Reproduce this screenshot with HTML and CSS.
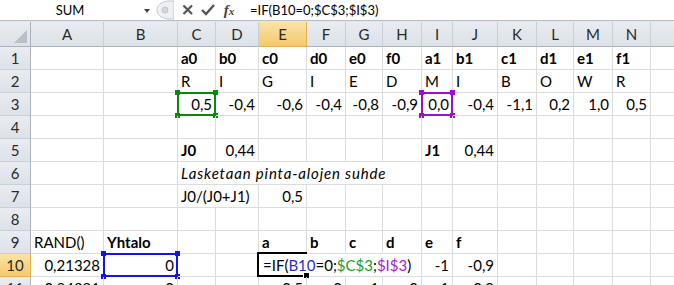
FILE: index.html
```html
<html>
<head>
    <title>Sheet1</title>
    <link rel="stylesheet" href="styles.css">
</head>
<body>
    <div class="fbar">
        <div class="namebox">SUM</div>
        <div class="nbarrow"></div>
        <svg class="splitter" width="20" height="20" viewBox="0 0 20 20">
            <path d="M14 1 C6 2 3 6 3 10 C3 14 6 18 14 19 L20 19 L20 1 Z" fill="#eef0f3" stroke="#c3c8cf"/>
            <circle cx="11" cy="10" r="3" fill="#d3d7dc" stroke="#c0c5cc"/>
        </svg>
        <svg class="fbtn" width="20" height="20" viewBox="0 0 20 20">
            <path d="M5.5 5.5 L14 14 M14 5.5 L5.5 14" stroke="#555" stroke-width="2.2"/>
        </svg>
        <svg class="fbtn" width="20" height="20" viewBox="0 0 20 20">
            <path d="M4 10 L8 14 L16 5" stroke="#555" stroke-width="2.4" fill="none"/>
        </svg>
        <div class="fx"><i>f</i><i class="sub">x</i></div>
        <div class="formula">=IF(B10=0;$C$3;$I$3)</div>
    </div>
    <div class="gap"></div>

    <div class="sheet">
        <div class="corner"><span></span></div>
        <div class="ch">A</div><div class="ch">B</div><div class="ch">C</div><div class="ch">D</div>
        <div class="ch on">E</div><div class="ch">F</div><div class="ch">G</div><div class="ch">H</div>
        <div class="ch">I</div><div class="ch">J</div><div class="ch">K</div><div class="ch">L</div>
        <div class="ch">M</div><div class="ch">N</div><div class="ch">O</div>

        <!-- 1 -->
        <div class="rh">1</div><div class="c"></div><div class="c"></div>
        <div class="c b">a0</div><div class="c b">b0</div><div class="c b">c0</div><div class="c b">d0</div>
        <div class="c b">e0</div><div class="c b">f0</div><div class="c b">a1</div><div class="c b">b1</div>
        <div class="c b">c1</div><div class="c b">d1</div><div class="c b">e1</div><div class="c b">f1</div>
        <div class="c"></div>

        <!-- 2 -->
        <div class="rh">2</div><div class="c"></div><div class="c"></div>
        <div class="c">R</div><div class="c">I</div><div class="c">G</div><div class="c">I</div>
        <div class="c">E</div><div class="c">D</div><div class="c">M</div><div class="c">I</div>
        <div class="c">B</div><div class="c">O</div><div class="c">W</div><div class="c">R</div>
        <div class="c"></div>

        <!-- 3 -->
        <div class="rh">3</div><div class="c"></div><div class="c"></div>
        <div class="c r">0,5<div class="box green"><i></i><i></i><i></i><i></i></div></div>
        <div class="c r">-0,4</div><div class="c r">-0,6</div><div class="c r">-0,4</div>
        <div class="c r">-0,8</div><div class="c r">-0,9</div>
        <div class="c r">0,0<div class="box purple"><i></i><i></i><i></i><i></i></div></div>
        <div class="c r">-0,4</div><div class="c r">-1,1</div><div class="c r">0,2</div>
        <div class="c r">1,0</div><div class="c r">0,5</div><div class="c"></div>

        <!-- 4 -->
        <div class="rh">4</div><div class="c"></div><div class="c"></div><div class="c"></div>
        <div class="c"></div><div class="c"></div><div class="c"></div><div class="c"></div>
        <div class="c"></div><div class="c"></div><div class="c"></div><div class="c"></div>
        <div class="c"></div><div class="c"></div><div class="c"></div><div class="c"></div>

        <!-- 5 -->
        <div class="rh">5</div><div class="c"></div><div class="c"></div>
        <div class="c b">J0</div><div class="c r">0,44</div><div class="c"></div><div class="c"></div>
        <div class="c"></div><div class="c"></div><div class="c b">J1</div><div class="c r">0,44</div>
        <div class="c"></div><div class="c"></div><div class="c"></div><div class="c"></div>
        <div class="c"></div>

        <!-- 6 -->
        <div class="rh">6</div><div class="c"></div><div class="c"></div>
        <div class="c it span6">Lasketaan pinta-alojen suhde</div>
        <div class="c"></div><div class="c"></div><div class="c"></div><div class="c"></div>
        <div class="c"></div><div class="c"></div><div class="c"></div>

        <!-- 7 -->
        <div class="rh">7</div><div class="c"></div><div class="c"></div>
        <div class="c span2">J0/(J0+J1)</div><div class="c r">0,5</div>
        <div class="c"></div><div class="c"></div><div class="c"></div><div class="c"></div>
        <div class="c"></div><div class="c"></div><div class="c"></div><div class="c"></div>
        <div class="c"></div><div class="c"></div>

        <!-- 8 -->
        <div class="rh">8</div><div class="c"></div><div class="c"></div><div class="c"></div>
        <div class="c"></div><div class="c"></div><div class="c"></div><div class="c"></div>
        <div class="c"></div><div class="c"></div><div class="c"></div><div class="c"></div>
        <div class="c"></div><div class="c"></div><div class="c"></div><div class="c"></div>

        <!-- 9 -->
        <div class="rh">9</div><div class="c">RAND()</div><div class="c b">Yhtalo</div>
        <div class="c"></div><div class="c"></div>
        <div class="c b">a</div><div class="c b">b</div><div class="c b">c</div><div class="c b">d</div>
        <div class="c b">e</div><div class="c b">f</div>
        <div class="c"></div><div class="c"></div><div class="c"></div><div class="c"></div>
        <div class="c"></div>

        <!-- 10 -->
        <div class="rh on">10</div><div class="c r">0,21328</div>
        <div class="c r">0<div class="box blue"><i></i><i></i><i></i><i></i></div></div>
        <div class="c"></div><div class="c"></div>
        <div class="c span4 edit">=IF(<span class="kb">B10</span>=0;<span class="kg">$C$3</span>;<span class="kp">$I$3</span>)<div class="active"><i></i></div></div>
        <div class="c r">-1</div><div class="c r">-0,9</div>
        <div class="c"></div><div class="c"></div><div class="c"></div><div class="c"></div>
        <div class="c"></div>

        <!-- 11 -->
        <div class="rh">11</div><div class="c r">0,84891</div><div class="c r">0</div>
        <div class="c"></div><div class="c"></div>
        <div class="c r">-0,5</div><div class="c r">0</div><div class="c r">-1</div><div class="c r">0</div>
        <div class="c r">-1</div><div class="c r">-0,9</div>
        <div class="c"></div><div class="c"></div><div class="c"></div><div class="c"></div>
        <div class="c"></div>
    </div>
</body>
</html>
```

FILE: styles.css
```css
body {
    margin: 0;
    background-color: #fff;
    font-family: Lato, "Liberation Sans", sans-serif;
    color: #000;
    overflow: hidden;
}

/* formula bar */
.fbar {
    display: flex;
    align-items: center;
    height: 20px;
    border-bottom: 1px solid #b6bec8;
    font-size: 13px;
}

.namebox {
    width: 140px;
    text-align: center;
}

.nbarrow {
    width: 14px;
    height: 20px;
    position: relative;
}

.nbarrow::after {
    content: "";
    position: absolute;
    left: 4px;
    top: 9px;
    border-left: 3.5px solid transparent;
    border-right: 3.5px solid transparent;
    border-top: 4px solid #444;
}

.splitter {
    margin-right: 4px;
}

.fx {
    width: 22px;
    text-align: center;
    font-family: "Liberation Serif", serif;
    font-size: 15px;
    color: #444;
    font-weight: bold;
}

.fx .sub {
    font-size: 11px;
}

.formula {
    padding-left: 10px;
}

.gap {
    height: 1px;
    background-color: #e3e7ec;
}

/* grid */
.sheet {
    display: grid;
    grid-template-columns: 31px 73px 74px 38px 43px 48px 39px 37px 39px 31px 45px 39px 37px 39px 38px 60px;
    grid-template-rows: 25px;
    grid-auto-rows: 23px;
    font-size: 15px;
}

.corner,
.ch,
.rh {
    background: linear-gradient(#e9ecf0, #dde2e8);
    color: #2a2a2a;
    text-align: center;
    box-sizing: border-box;
}

.corner {
    border-right: 1px solid #a9b2bd;
    border-bottom: 1px solid #a9b2bd;
    position: relative;
}

.corner span {
    position: absolute;
    right: 3px;
    bottom: 3px;
    border-left: 13px solid transparent;
    border-bottom: 13px solid #b9bfc7;
}

.ch {
    line-height: 24px;
    border-right: 1px solid #c9cfd6;
    border-bottom: 1px solid #a9b2bd;
}

.rh {
    line-height: 22px;
    border-right: 1px solid #a9b2bd;
    border-bottom: 1px solid #c9cfd6;
}

.ch.on,
.rh.on {
    background: linear-gradient(#fbe3a6, #f4c96d);
    border-color: #e4b253;
}

.c {
    position: relative;
    box-sizing: border-box;
    border-right: 1px solid #dadcdf;
    border-bottom: 1px solid #dadcdf;
    padding: 0 3px 0 3px;
    line-height: 22px;
    white-space: nowrap;
}

.r {
    text-align: right;
}

.b {
    font-weight: bold;
}

.it {
    font-style: italic;
    letter-spacing: 0.85px;
}

.span2 {
    grid-column: span 2;
}

.span4 {
    grid-column: span 4;
}

.span6 {
    grid-column: span 6;
}

/* range highlights */
.box {
    position: absolute;
    left: -1px;
    top: -1px;
    right: -1px;
    bottom: -1px;
    border: 2px solid;
}

.box i {
    position: absolute;
    width: 5px;
    height: 5px;
    background-color: currentColor;
}

.box i:nth-child(1) { left: -4px; top: -4px; }
.box i:nth-child(2) { right: -4px; top: -4px; }
.box i:nth-child(3) { left: -4px; bottom: -4px; }
.box i:nth-child(4) { right: -4px; bottom: -4px; }

.green {
    color: #0a8a0a;
}

.purple {
    color: #9b0fd0;
}

.blue {
    color: #1414e6;
}

.edit {
    padding-left: 4px;
}

.active {
    position: absolute;
    left: -2px;
    top: -2px;
    bottom: -1px;
    width: 48px;
    border: 2px solid #000;
    border-right: none;
}

.active i {
    position: absolute;
    right: -3px;
    bottom: -4px;
    width: 5px;
    height: 5px;
    background-color: #000;
    border: 1px solid #fff;
}

.kb {
    color: #1f2fd6;
}

.kg {
    color: #1d9e1d;
}

.kp {
    color: #a523d3;
}
```
